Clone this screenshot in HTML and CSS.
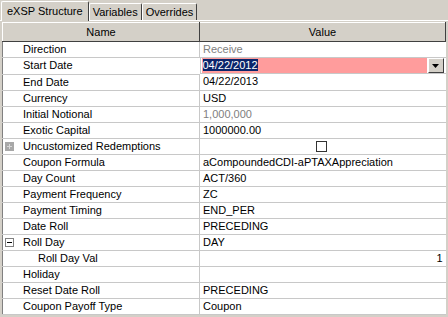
FILE: index.html
```html
<!DOCTYPE html>
<html lang="en">
<head>
  <meta charset="UTF-8">
  <title>eXSP Structure</title>
  <link rel="stylesheet" href="styles.css">
</head>
<body>
  <div class="tabs">
    <div class="tab active">eXSP Structure</div>
    <div class="tab">Variables</div>
    <div class="tab">Overrides</div>
  </div>

  <div class="panel">
    <table class="grid">
      <colgroup><col class="col-name"><col></colgroup>
      <thead>
        <tr><th>Name</th><th>Value</th></tr>
      </thead>
      <tbody>
        <tr><td class="name"><span class="slot"></span>Direction</td><td class="muted">Receive</td></tr>
        <tr><td class="name"><span class="slot"></span>Start Date</td>
          <td class="editing"><span class="edit"><span class="sel">04/22/2012</span></span><span class="drop"><svg width="7" height="4" viewBox="0 0 7 4"><path d="M0 0h7L3.5 4z" fill="#000"/></svg></span></td></tr>
        <tr><td class="name"><span class="slot"></span>End Date</td><td>04/22/2013</td></tr>
        <tr><td class="name"><span class="slot"></span>Currency</td><td>USD</td></tr>
        <tr><td class="name"><span class="slot"></span>Initial Notional</td><td class="muted">1,000,000</td></tr>
        <tr><td class="name"><span class="slot"></span>Exotic Capital</td><td>1000000.00</td></tr>
        <tr><td class="name"><span class="slot"><span class="box plus disabled"></span></span>Uncustomized Redemptions</td><td class="center"><span class="check"></span></td></tr>
        <tr><td class="name"><span class="slot"></span>Coupon Formula</td><td>aCompoundedCDI-aPTAXAppreciation</td></tr>
        <tr><td class="name"><span class="slot"></span>Day Count</td><td>ACT/360</td></tr>
        <tr><td class="name"><span class="slot"></span>Payment Frequency</td><td>ZC</td></tr>
        <tr><td class="name"><span class="slot"></span>Payment Timing</td><td>END_PER</td></tr>
        <tr><td class="name"><span class="slot"></span>Date Roll</td><td>PRECEDING</td></tr>
        <tr><td class="name"><span class="slot"><span class="box minus"></span></span>Roll Day</td><td>DAY</td></tr>
        <tr><td class="name child"><span class="slot"></span>Roll Day Val</td><td class="right">1</td></tr>
        <tr><td class="name"><span class="slot"></span>Holiday</td><td></td></tr>
        <tr><td class="name"><span class="slot"></span>Reset Date Roll</td><td>PRECEDING</td></tr>
        <tr><td class="name"><span class="slot"></span>Coupon Payoff Type</td><td>Coupon</td></tr>
      </tbody>
    </table>
  </div>
</body>
</html>
```

FILE: styles.css
```css
:root {
  --face: #d4d0c8;
  --shadow: #808080;
  --dark: #404040;
  --line: #c8c8c8;
  --text: #000;
}
body {
  margin: 0;
  background: var(--face);
  font-family: 'Liberation Sans', Arial, sans-serif;
  font-size: 11px;
  color: var(--text);
  width: 448px;
  height: 317px;
  overflow: hidden;
}
.tabs {
  display: flex;
  align-items: flex-end;
  height: 21px;
  padding-left: 1px;
  border-bottom: 1px solid #fff;
  box-sizing: border-box;
}
.tab {
  height: 17px;
  line-height: 16px;
  padding: 0 3px;
  border-left: 1px solid #fff;
  border-top: 1px solid #fff;
  border-right: 1px solid var(--dark);
  border-radius: 2px 2px 0 0;
  box-sizing: border-box;
}
.tab.active {
  height: 20px;
  line-height: 18px;
  padding: 0 5px;
  margin-bottom: -1px;
  background: var(--face);
  position: relative;
  z-index: 1;
}
.panel {
  padding: 1px 2px 0 2px;
}
.grid {
  width: 444px;
  border-collapse: collapse;
  table-layout: fixed;
  background: #fff;
  border-left: 1px solid var(--shadow);
}
.col-name {
  width: 197px;
}
.grid th {
  height: 19px;
  padding: 0;
  font-weight: normal;
  background: var(--face);
  border-top: 1px solid #fff;
  border-left: 1px solid #fff;
  border-right: 1px solid var(--dark);
  border-bottom: 1px solid var(--dark);
  box-sizing: border-box;
}
.grid td {
  height: 15px;
  padding: 0 0 0 3px;
  border-bottom: 1px solid var(--line);
  border-left: 1px solid var(--line);
  white-space: nowrap;
  overflow: hidden;
  line-height: 15px;
}
.grid td.name {
  padding-left: 0;
  border-left: none;
}
.slot {
  display: inline-block;
  width: 20px;
  height: 15px;
  vertical-align: top;
  position: relative;
}
.child .slot {
  width: 35px;
}
.box {
  position: absolute;
  left: 2px;
  top: 3px;
  width: 9px;
  height: 9px;
  box-sizing: border-box;
  border: 1px solid var(--shadow);
  background: #fff;
}
.box::before,
.box::after {
  content: '';
  position: absolute;
  background: #000;
}
.box::before {
  left: 1px;
  top: 3px;
  width: 5px;
  height: 1px;
}
.plus::after {
  left: 3px;
  top: 1px;
  width: 1px;
  height: 5px;
}
.box.disabled {
  background: #a8a8a8;
  border-color: #a8a8a8;
}
.box.disabled::before,
.box.disabled::after {
  background: #d8d8d8;
}
.muted {
  color: #808080;
}
.right {
  text-align: right;
  padding-right: 3px !important;
}
.center {
  text-align: center;
}
.check {
  display: inline-block;
  width: 11px;
  height: 11px;
  margin-top: 2px;
  margin-right: 6px;
  vertical-align: top;
  box-sizing: border-box;
  border: 1px solid #333;
  background: #fff;
}
.grid td.editing {
  padding: 0 2px 0 1px;
}
.editing {
  display: flex;
}
.edit {
  flex: 1;
  background: #ff9c9c;
  padding-left: 1px;
}
.sel {
  background: #0a246a;
  color: #fff;
}
.drop {
  width: 16px;
  height: 15px;
  margin-left: 1px;
  box-sizing: border-box;
  border-top: 1px solid #fff;
  border-left: 1px solid #fff;
  border-right: 1px solid var(--dark);
  border-bottom: 1px solid var(--dark);
  background: var(--face);
  display: flex;
  align-items: center;
  justify-content: center;
}
```
